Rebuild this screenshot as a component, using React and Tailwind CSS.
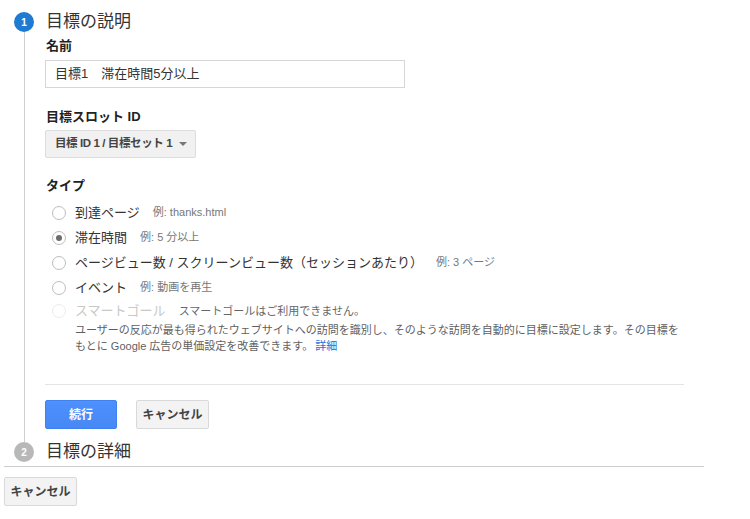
// Goal setup - step 1 (description) with step 2 collapsed
const FONT = "font-['Liberation_Sans','Noto_Sans_CJK_JP',sans-serif]"

const types = [
  { label: '到達ページ', example: '例: thanks.html' },
  { label: '滞在時間', example: '例: 5 分以上', checked: true },
  { label: 'ページビュー数 / スクリーンビュー数（セッションあたり）', example: '例: 3 ページ' },
  { label: 'イベント', example: '例: 動画を再生' },
]

function Radio({ checked, disabled }) {
  return (
    <span
      className={
        'ml-[7px] mr-[9px] flex h-[14px] w-[14px] shrink-0 items-center justify-center rounded-full border ' +
        (disabled ? 'border-[#ececec]' : 'border-[#bdbdbd]')
      }
    >
      {checked && <span className="h-[6px] w-[6px] rounded-full bg-[#6d6d6d]" />}
    </span>
  )
}

function GrayButton({ children }) {
  return (
    <button className="h-[29px] w-[73px] rounded-[2px] border border-[#d9d9d9] bg-[#f3f3f3] text-[12px] font-bold text-[#444]">
      {children}
    </button>
  )
}

export default function App() {
  return (
    <div className={`h-[519px] w-[750px] bg-white text-[#333] ${FONT}`}>
      {/* Step 1 */}
      <div className="flex pt-[12px]">
        <div className="flex w-[45px] shrink-0 flex-col pl-[14px]">
          <div className="flex h-[20px] w-[20px] items-center justify-center rounded-full bg-[#1f7bd1] text-[10px] font-bold text-white">
            1
          </div>
          <div className="ml-[10px] w-px flex-1 bg-[#cfcfcf]" />
        </div>

        <div className="flex w-[639px] flex-col pb-[13px]">
          <h2 className="ml-px h-[20px] text-[17px] leading-[20px] text-[#333]">目標の説明</h2>

          <label className="mt-[5px] ml-px text-[13px] font-bold leading-[18px] text-[#222]">名前</label>
          <div className="mt-[5px] flex h-[28px] w-[360px] items-center border border-[#d6d6d6] px-[9px] text-[13px] text-[#333]">
            目標1　滞在時間5分以上
          </div>

          <label className="mt-[20px] ml-px text-[13px] font-bold leading-[18px] text-[#222]">目標スロット ID</label>
          <button className="mt-[4px] flex h-[28px] w-[151px] items-center justify-between whitespace-nowrap rounded-[2px] border border-[#dcdcdc] bg-[#f1f1f1] pl-[9px] pr-[8px] text-[11.5px] font-bold tracking-[-0.4px] text-[#444]">
            <span>目標 ID 1 / 目標セット 1</span>
            <span className="h-0 w-0 shrink-0 border-x-[4px] border-t-[4px] border-x-transparent border-t-[#777]" />
          </button>

          <label className="mt-[19px] ml-px text-[13px] font-bold leading-[18px] text-[#222]">タイプ</label>
          <div className="mt-[5px] flex flex-col">
            {types.map((t) => (
              <div key={t.label} className="flex h-[25px] items-center">
                <Radio checked={t.checked} />
                <span className="text-[13px] text-[#333]">{t.label}</span>
                <span className="ml-[13px] text-[11px] text-[#777]">{t.example}</span>
              </div>
            ))}
            <div className="flex h-[22px] items-center">
              <Radio disabled />
              <span className="text-[13px] text-[#c8c8c8]">スマートゴール</span>
              <span className="ml-[13px] text-[11px] text-[#666]">スマートゴールはご利用できません。</span>
            </div>
            <p className="ml-[30px] w-[612px] text-[11px] leading-[16px] text-[#5f5f5f]">
              ユーザーの反応が最も得られたウェブサイトへの訪問を識別し、そのような訪問を自動的に目標に設定します。その目標をもとに Google 広告の単価設定を改善できます。
              <a className="ml-[2px] text-[#1a6fd6]">詳細</a>
            </p>
          </div>

          <div className="mt-[30px] border-t border-[#e4e4e4]" />

          <div className="mt-[15px] flex gap-[19px]">
            <button className="h-[29px] w-[72px] rounded-[2px] border border-[#3d82f0] bg-gradient-to-b from-[#4d90fe] to-[#4788f4] text-[12px] font-bold text-white">
              続行
            </button>
            <GrayButton>キャンセル</GrayButton>
          </div>
        </div>
      </div>

      {/* Step 2 */}
      <div className="flex items-center">
        <div className="w-[45px] shrink-0 pl-[14px]">
          <div className="flex h-[20px] w-[20px] items-center justify-center rounded-full bg-[#b8b8b8] text-[10px] font-bold text-white">
            2
          </div>
        </div>
        <h2 className="ml-px text-[17px] leading-[20px] text-[#333]">目標の詳細</h2>
      </div>

      <div className="ml-[4px] mt-[4px] w-[700px] border-t border-[#cccccc]" />

      <div className="ml-[4px] mt-[10px]">
        <GrayButton>キャンセル</GrayButton>
      </div>
    </div>
  )
}
